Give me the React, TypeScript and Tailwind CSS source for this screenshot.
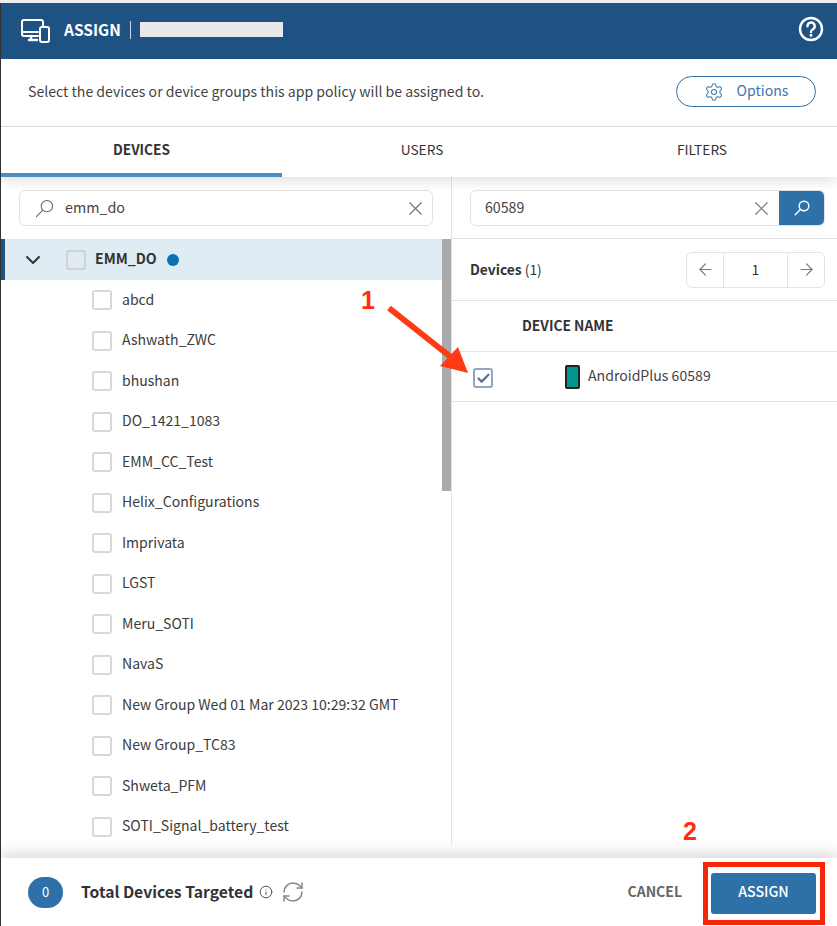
import { ArrowLeft, ArrowRight, Check, ChevronDown, Info, RefreshCw, Settings, X } from 'lucide-react'

const groups = [
  'abcd',
  'Ashwath_ZWC',
  'bhushan',
  'DO_1421_1083',
  'EMM_CC_Test',
  'Helix_Configurations',
  'Imprivata',
  'LGST',
  'Meru_SOTI',
  'NavaS',
  'New Group Wed 01 Mar 2023 10:29:32 GMT',
  'New Group_TC83',
  'Shweta_PFM',
  'SOTI_Signal_battery_test',
]

function DevicesIcon() {
  return (
    <svg width="29" height="24" viewBox="0 0 29 24" fill="none" stroke="white" strokeWidth="2" strokeLinejoin="round" strokeLinecap="round">
      <path d="M17 17H3a2 2 0 0 1-2-2V3a2 2 0 0 1 2-2h17a2 2 0 0 1 2 2v4" />
      <path d="M1 13h16" />
      <path d="M10 17v3M8 21h8" strokeWidth="2.4" />
      <rect x="19" y="8" width="9" height="15" rx="2" />
    </svg>
  )
}

// lens sits top right, long handle runs down to the left
function SearchIcon({ size, width, className }: { size: number; width: number; className: string }) {
  return (
    <svg className={className} width={size} height={size} viewBox="0 0 20 20" fill="none" stroke="currentColor" strokeWidth={width} strokeLinecap="round">
      <circle cx="12.5" cy="7.5" r="6" />
      <path d="M8 12 L1.5 18.5" />
    </svg>
  )
}

function Annotations() {
  return (
    <>
      <span className="absolute left-[361px] top-[285px] z-20 font-['Liberation_Sans',sans-serif] text-[25px] leading-[30px] font-bold text-[#ff2d0d]">1</span>
      <svg className="absolute left-[380px] top-[300px] z-20" width="100" height="90" viewBox="0 0 100 90">
        <path d="M9 8 L72 58" stroke="#ff3b14" strokeWidth="6" />
        <path d="M60 66 L88 73 L78 47 Z" fill="#ff3b14" />
      </svg>
      <span className="absolute left-[683px] top-[816px] z-20 font-['Liberation_Sans',sans-serif] text-[25px] leading-[30px] font-bold text-[#ff2d0d]">2</span>
      <div className="absolute left-[703px] top-[862px] z-20 h-[63px] w-[122px] border-[5px] border-[#f5260a]" />
    </>
  )
}

export default function App() {
  return (
    <div className="relative flex h-[926px] w-[837px] flex-col overflow-hidden bg-white font-['Noto_Sans_CJK_SC','Noto_Sans',sans-serif] text-[14px] text-[#333]">
      <div className="h-[3px] shrink-0 bg-[#eeeeee]" />
      <div className="flex h-[56px] shrink-0 items-center border-l border-[#333] bg-[#1e5282] pr-[13px] pl-[20px] text-white">
        <DevicesIcon />
        <span className="mb-[3px] ml-[14px] text-[15.5px] font-semibold">ASSIGN</span>
        <div className="mx-[9px] mb-[2px] h-[18px] w-px bg-[#c9d6e2]" />
        <div className="mb-[3px] h-[15px] w-[143px] bg-[#e9e9e9]" />
        <svg className="mb-[4px] ml-auto" width="26" height="26" viewBox="0 0 26 26" fill="none" stroke="white" strokeWidth="2.4" strokeLinecap="round">
          <circle cx="13" cy="13" r="11" />
          <path d="M9.5 10.2a3.6 3.6 0 1 1 5.4 3.1c-1.2.7-1.9 1.3-1.9 2.6" />
          <path d="M13 19.2v.2" strokeWidth="2.8" />
        </svg>
      </div>

      <div className="flex min-h-0 flex-1 flex-col border-l border-[#333]">
        <div className="flex h-[68px] shrink-0 items-center justify-between border-b border-[#e3e3e3] pr-[21px] pl-[27px]">
          <span className="mb-[1px] text-[14.1px] text-[#444]">Select the devices or device groups this app policy will be assigned to.</span>
          <button className="mb-[2px] flex h-[31px] w-[140px] items-center justify-center gap-[13px] rounded-full border border-[#2e70a8] text-[14.1px] text-[#3a78ae]">
            <Settings size={20} strokeWidth={1.3} />
            <span className="mb-[2px]">Options</span>
          </button>
        </div>

        <div className="z-10 flex h-[50px] shrink-0 overflow-hidden bg-white shadow-[0_4px_12px_rgba(0,0,0,0.12)]">
          <div className="flex w-[281px] shrink-0 items-center justify-center border-b-4 border-[#4a8fc1] pb-[2px] text-[13.7px] font-semibold text-[#333]">DEVICES</div>
          <div className="flex w-[280px] shrink-0 items-center justify-center pb-[6px] text-[13.7px]">USERS</div>
          <div className="flex w-[280px] shrink-0 items-center justify-center pb-[6px] text-[13.7px]">FILTERS</div>
        </div>

        <div className="mb-[13px] flex min-h-0 flex-1">
          <div className="flex w-[451px] shrink-0 flex-col border-r border-[#e3e3e3]">
            <div className="flex h-[62px] shrink-0 items-start px-[18px] pt-[13px]">
              <div className="flex h-[36px] w-[414px] items-center rounded-md border border-[#e3e3e3] pr-[5px] pl-[15px]">
                <SearchIcon size={19} width={1.1} className="text-[#666]" />
                <span className="mb-[2px] ml-[11px] text-[14.3px] text-[#444]">emm_do</span>
                <X size={23} strokeWidth={1.2} className="ml-auto text-[#777]" />
              </div>
            </div>
            <div className="flex min-h-0 flex-1">
              <div className="min-w-0 flex-1">
                <div className="flex h-[41px] items-center border-l-[4px] border-[#1e5282] bg-[#e0ecf4] pl-[16px]">
                  <ChevronDown size={24} strokeWidth={2} className="text-[#333]" />
                  <div className="ml-[21px] h-[20px] w-[20px] rounded-[3px] border-2 border-[#d2d2d2]" />
                  <span className="mb-[2px] ml-[9px] text-[14.1px] font-bold text-[#333]">EMM_DO</span>
                  <span className="ml-[10px] h-[12px] w-[12px] rounded-full bg-[#0a72b0]" />
                </div>
                {groups.map((g) => (
                  <div key={g} className="flex h-[40.5px] items-center pl-[91px]">
                    <div className="h-[20px] w-[20px] shrink-0 rounded-[3px] border-2 border-[#d8d8d8]" />
                    <span className="mb-[2px] ml-[10px] text-[14.05px] whitespace-nowrap text-[#3c3c3c]">{g}</span>
                  </div>
                ))}
              </div>
              <div className="w-[9px] shrink-0">
                <div className="h-[252px] bg-[#aaaaaa]" />
              </div>
            </div>
          </div>

          <div className="min-w-0 flex-1">
            <div className="flex h-[62px] items-start border-b border-[#e3e3e3] pt-[13px] pl-[18px]">
              <div className="flex h-[36px] w-[355px] items-center overflow-hidden rounded-md border border-[#e3e3e3] pl-[14px]">
                <span className="text-[14.2px] text-[#444]">60589</span>
                <X size={23} strokeWidth={1.2} className="mr-[6px] ml-auto text-[#777]" />
                <div className="flex h-[36px] w-[45px] items-center justify-center bg-[#2e70a8]">
                  <SearchIcon size={16} width={1.8} className="text-white" />
                </div>
              </div>
            </div>
            <div className="flex h-[62px] items-center justify-between border-b border-[#e3e3e3] pr-[12px] pl-[18px]">
              <span className="mb-[1px] text-[13.8px]">
                <span className="font-semibold">Devices</span> (1)
              </span>
              <div className="flex h-[36px] w-[139px] items-center rounded-md border border-[#e3e3e3]">
                <div className="flex h-full w-[37px] items-center justify-center border-r border-[#e3e3e3]">
                  <ArrowLeft size={19} strokeWidth={1.4} className="text-[#777]" />
                </div>
                <div className="flex-1 text-center text-[14px]">1</div>
                <div className="flex h-full w-[37px] items-center justify-center border-l border-[#e3e3e3]">
                  <ArrowRight size={19} strokeWidth={1.4} className="text-[#777]" />
                </div>
              </div>
            </div>
            <div className="flex h-[51px] items-center border-b border-[#e3e3e3] pb-[2px] pl-[70px]">
              <span className="text-[13.8px] font-semibold text-[#333]">DEVICE NAME</span>
            </div>
            <div className="flex h-[50px] items-center border-b border-[#e3e3e3] pl-[21px]">
              <div className="mt-[3px] flex h-[20px] w-[20px] items-center justify-center rounded-[3px] border-2 border-[#8fa8c0] text-[#4f7196]">
                <Check size={15} strokeWidth={3.5} />
              </div>
              <div className="ml-[72px] h-[24px] w-[15px] rounded-[2px] border-2 border-[#222] bg-[#00968f]" />
              <span className="mb-[2px] ml-[8px] text-[14.1px] text-[#444]">AndroidPlus 60589</span>
            </div>
          </div>
        </div>

        <div className="z-10 flex h-[68px] shrink-0 items-center rounded-bl-lg bg-white pr-[21px] pl-[27px] shadow-[0_-5px_14px_rgba(0,0,0,0.14)]">
          <div className="mt-[1px] flex h-[31px] w-[35px] items-center justify-center rounded-full bg-[#2e70a8] pb-[2px] text-[13px] text-white">0</div>
          <span className="ml-[18px] text-[15.7px] font-semibold text-[#333]">Total Devices Targeted</span>
          <Info size={14} strokeWidth={1.5} className="ml-[6px] text-[#444]" />
          <RefreshCw size={24} strokeWidth={1.5} className="ml-[8px] text-[#888]" />
          <span className="mb-[1px] ml-auto text-[14px] font-semibold text-[#666]">CANCEL</span>
          <button className="mt-[2px] ml-[29px] h-[41px] w-[105px] rounded-[3px] bg-[#2e70a8] pb-[2px] text-[14.2px] font-medium text-white">ASSIGN</button>
        </div>
      </div>
      <Annotations />
    </div>
  )
}
